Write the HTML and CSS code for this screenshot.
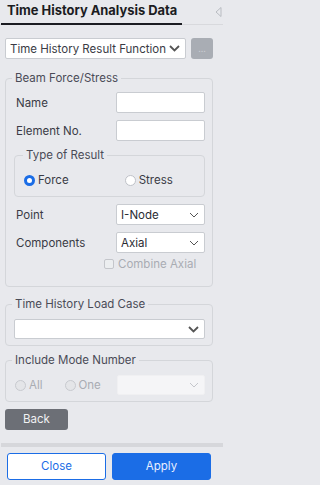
FILE: index.html
```html
<!DOCTYPE html>
<html>
<head>
<meta charset="utf-8">
<link rel="stylesheet" href="styles.css">
</head>
<body>
<div class="panel">
  <div class="header">
    <div class="tab">Time History Analysis Data</div>
    <div class="collapse"><svg width="7" height="10" viewBox="0 0 7 10"><polygon points="6,0.5 6,9.5 1,5" fill="none" stroke="#b9bcc2" stroke-width="1"/></svg></div>
  </div>
  <div class="content">
    <div class="toprow">
      <div class="select top-select">
        <span>Time History Result Function</span>
        <svg class="chev" width="11" height="7" viewBox="0 0 11 7"><polyline points="1,1 5.5,5.5 10,1" fill="none" stroke="#555" stroke-width="1.8"/></svg>
      </div>
      <div class="dots">...</div>
    </div>

    <fieldset class="group g1">
      <legend>Beam Force/Stress</legend>
      <div class="gbody b1">
        <div class="row first">
          <span class="lbl">Name</span>
          <div class="input"></div>
        </div>
        <div class="row">
          <span class="lbl">Element No.</span>
          <div class="input"></div>
        </div>
        <fieldset class="group inner">
          <legend>Type of Result</legend>
          <div class="gbody bi">
            <div class="radios">
              <label class="radio"><span class="dot checked"></span>Force</label>
              <label class="radio r2"><span class="dot"></span>Stress</label>
            </div>
          </div>
        </fieldset>
        <div class="row">
          <span class="lbl">Point</span>
          <div class="select small"><span>I-Node</span><svg class="chev" width="10" height="6" viewBox="0 0 10 6"><polyline points="1,1 5,5 9,1" fill="none" stroke="#555" stroke-width="1"/></svg></div>
        </div>
        <div class="row">
          <span class="lbl">Components</span>
          <div class="select small"><span>Axial</span><svg class="chev" width="10" height="6" viewBox="0 0 10 6"><polyline points="1,1 5,5 9,1" fill="none" stroke="#555" stroke-width="1"/></svg></div>
        </div>
        <div class="checkrow">
          <span class="box"></span><span>Combine Axial</span>
        </div>
      </div>
    </fieldset>

    <fieldset class="group g2">
      <legend>Time History Load Case</legend>
      <div class="gbody b2">
        <div class="select wide"><span></span><svg class="chev" width="11" height="7" viewBox="0 0 11 7"><polyline points="1,1 5.5,5.5 10,1" fill="none" stroke="#555" stroke-width="1.8"/></svg></div>
      </div>
    </fieldset>

    <fieldset class="group g3">
      <legend>Include Mode Number</legend>
      <div class="gbody b3">
        <div class="moderow">
          <label class="radio disabled"><span class="dot dis"></span>All</label>
          <label class="radio disabled one"><span class="dot dis"></span>One</label>
          <div class="select small dsel"><span></span><svg class="chev" width="10" height="6" viewBox="0 0 10 6"><polyline points="1,1 5,5 9,1" fill="none" stroke="#c4c6cb" stroke-width="1"/></svg></div>
        </div>
      </div>
    </fieldset>

    <div class="back">Back</div>
  </div>
  <div class="divider"></div>
  <div class="footer">
    <div class="btn close">Close</div>
    <div class="btn apply">Apply</div>
  </div>
</div>
</body>
</html>
```

FILE: styles.css
```css
* { box-sizing: border-box; }
html, body { margin: 0; padding: 0; }
body {
  width: 223px;
  height: 485px;
  background: #e8e9ed;
  font-family: Inter, "Noto Sans", sans-serif;
  font-size: 11.5px;
  color: #3a3b45;
  overflow: hidden;
}
.panel { width: 223px; height: 485px; display: flex; flex-direction: column; }
.header {
  height: 25px;
  display: flex;
  align-items: flex-start;
  justify-content: space-between;
  border-bottom: 1px solid #d8d9dd;
}
.tab {
  margin-left: 1px;
  width: 181px;
  height: 25px;
  padding: 3px 0 0 6px;
  font-weight: 700;
  font-size: 12.9px;
  color: #1b1c22;
  border-bottom: 2px solid #1b1c22;
  white-space: nowrap;
}
.collapse { padding: 6px 1px 0 0; }
.content { padding: 13px 10px 0 5px; }
.toprow { display: flex; gap: 5px; height: 21px; }
.select {
  background: #fff;
  border: 1px solid #c9ccd1;
  border-radius: 2px;
  display: flex;
  align-items: center;
  justify-content: space-between;
  padding: 0 5px 0 4px;
  color: #2a2b33;
  white-space: nowrap;
}
.top-select { width: 182px; height: 21px; font-size: 11.5px; color: #3a3b45; }
.dots {
  width: 22px;
  height: 21px;
  background: #a9adb4;
  border-radius: 3px;
  color: #c9ccd2;
  font-size: 9px;
  text-align: center;
  line-height: 22px;
}
.group {
  margin: 0;
  padding: 0;
  border: 1px solid #d4d6da;
  border-radius: 4px;
  min-width: 0;
}
.group legend {
  padding: 0 3px;
  margin-left: 6px;
  font-size: 11.5px;
  line-height: 16px;
  color: #4a4b57;
}
.g1 { margin-top: 11px; }
.b1 { padding: 6px 7px 16px 10px; }
.row { display: flex; justify-content: space-between; align-items: center; height: 21px; margin-top: 7px; }
.row.first { margin-top: 0; }
.lbl { color: #3a3b45; }
.input {
  width: 89px;
  height: 21px;
  background: #fff;
  border: 1px solid #c9ccd1;
  border-radius: 2px;
}
.small { width: 89px; height: 21px; }
.inner { margin: 6px 0 3px -2px; }
.inner legend { margin-left: 8px; }
.bi { padding: 9px 8px 8px 9px; }
.radios { display: flex; height: 16px; align-items: center; }
.radio { display: flex; align-items: center; gap: 3px; color: #3a3b45; }
.r2 { margin-left: 56px; }
.dot {
  width: 11px; height: 11px; border-radius: 50%;
  background: #fff; border: 1px solid #bfc2c8;
  display: inline-block;
}
.dot.checked { border: 3px solid #1b6de6; }
.dot.dis { background: #e4e5e8; border-color: #c8cacf; }
.radio.disabled { color: #a9acb3; }
.checkrow { display: flex; align-items: center; gap: 4px; margin-left: 88px; margin-top: 5px; height: 12px; color: #a9acb3; }
.box { width: 10px; height: 10px; border: 1px solid #c4c6cb; border-radius: 2px; background: #eceef0; }
.g2 { margin-top: 9px; }
.b2 { padding: 7px 7px 6px 8px; }
.wide { width: 191px; height: 20px; }
.g3 { margin-top: 6px; }
.b3 { padding: 7px 7px 6px 9px; }
.moderow { display: flex; align-items: center; height: 20px; }
.one { margin-left: 22px; }
.dsel { margin-left: auto; width: 88px; height: 20px; background: #f5f5f7; border-color: #f0f0f2; }
.back {
  margin-top: 7px;
  width: 63px;
  height: 21px;
  background: #6c6f76;
  border-radius: 3px;
  color: #f0f1f3;
  text-align: center;
  line-height: 21px;
}
.divider { height: 4px; background: #d6d7db; margin: 13px 0 6px 1px; }
.footer { display: flex; gap: 6px; padding: 0 12px 0 7px; }
.btn {
  width: 99px;
  height: 27px;
  border-radius: 3px;
  text-align: center;
  line-height: 25px;
  font-size: 11.5px;
}
.close { background: #fff; border: 1px solid #1b6de6; color: #1b6de6; }
.apply { background: #1b6de6; border: 1px solid #1b6de6; color: #e8efff; }
```
